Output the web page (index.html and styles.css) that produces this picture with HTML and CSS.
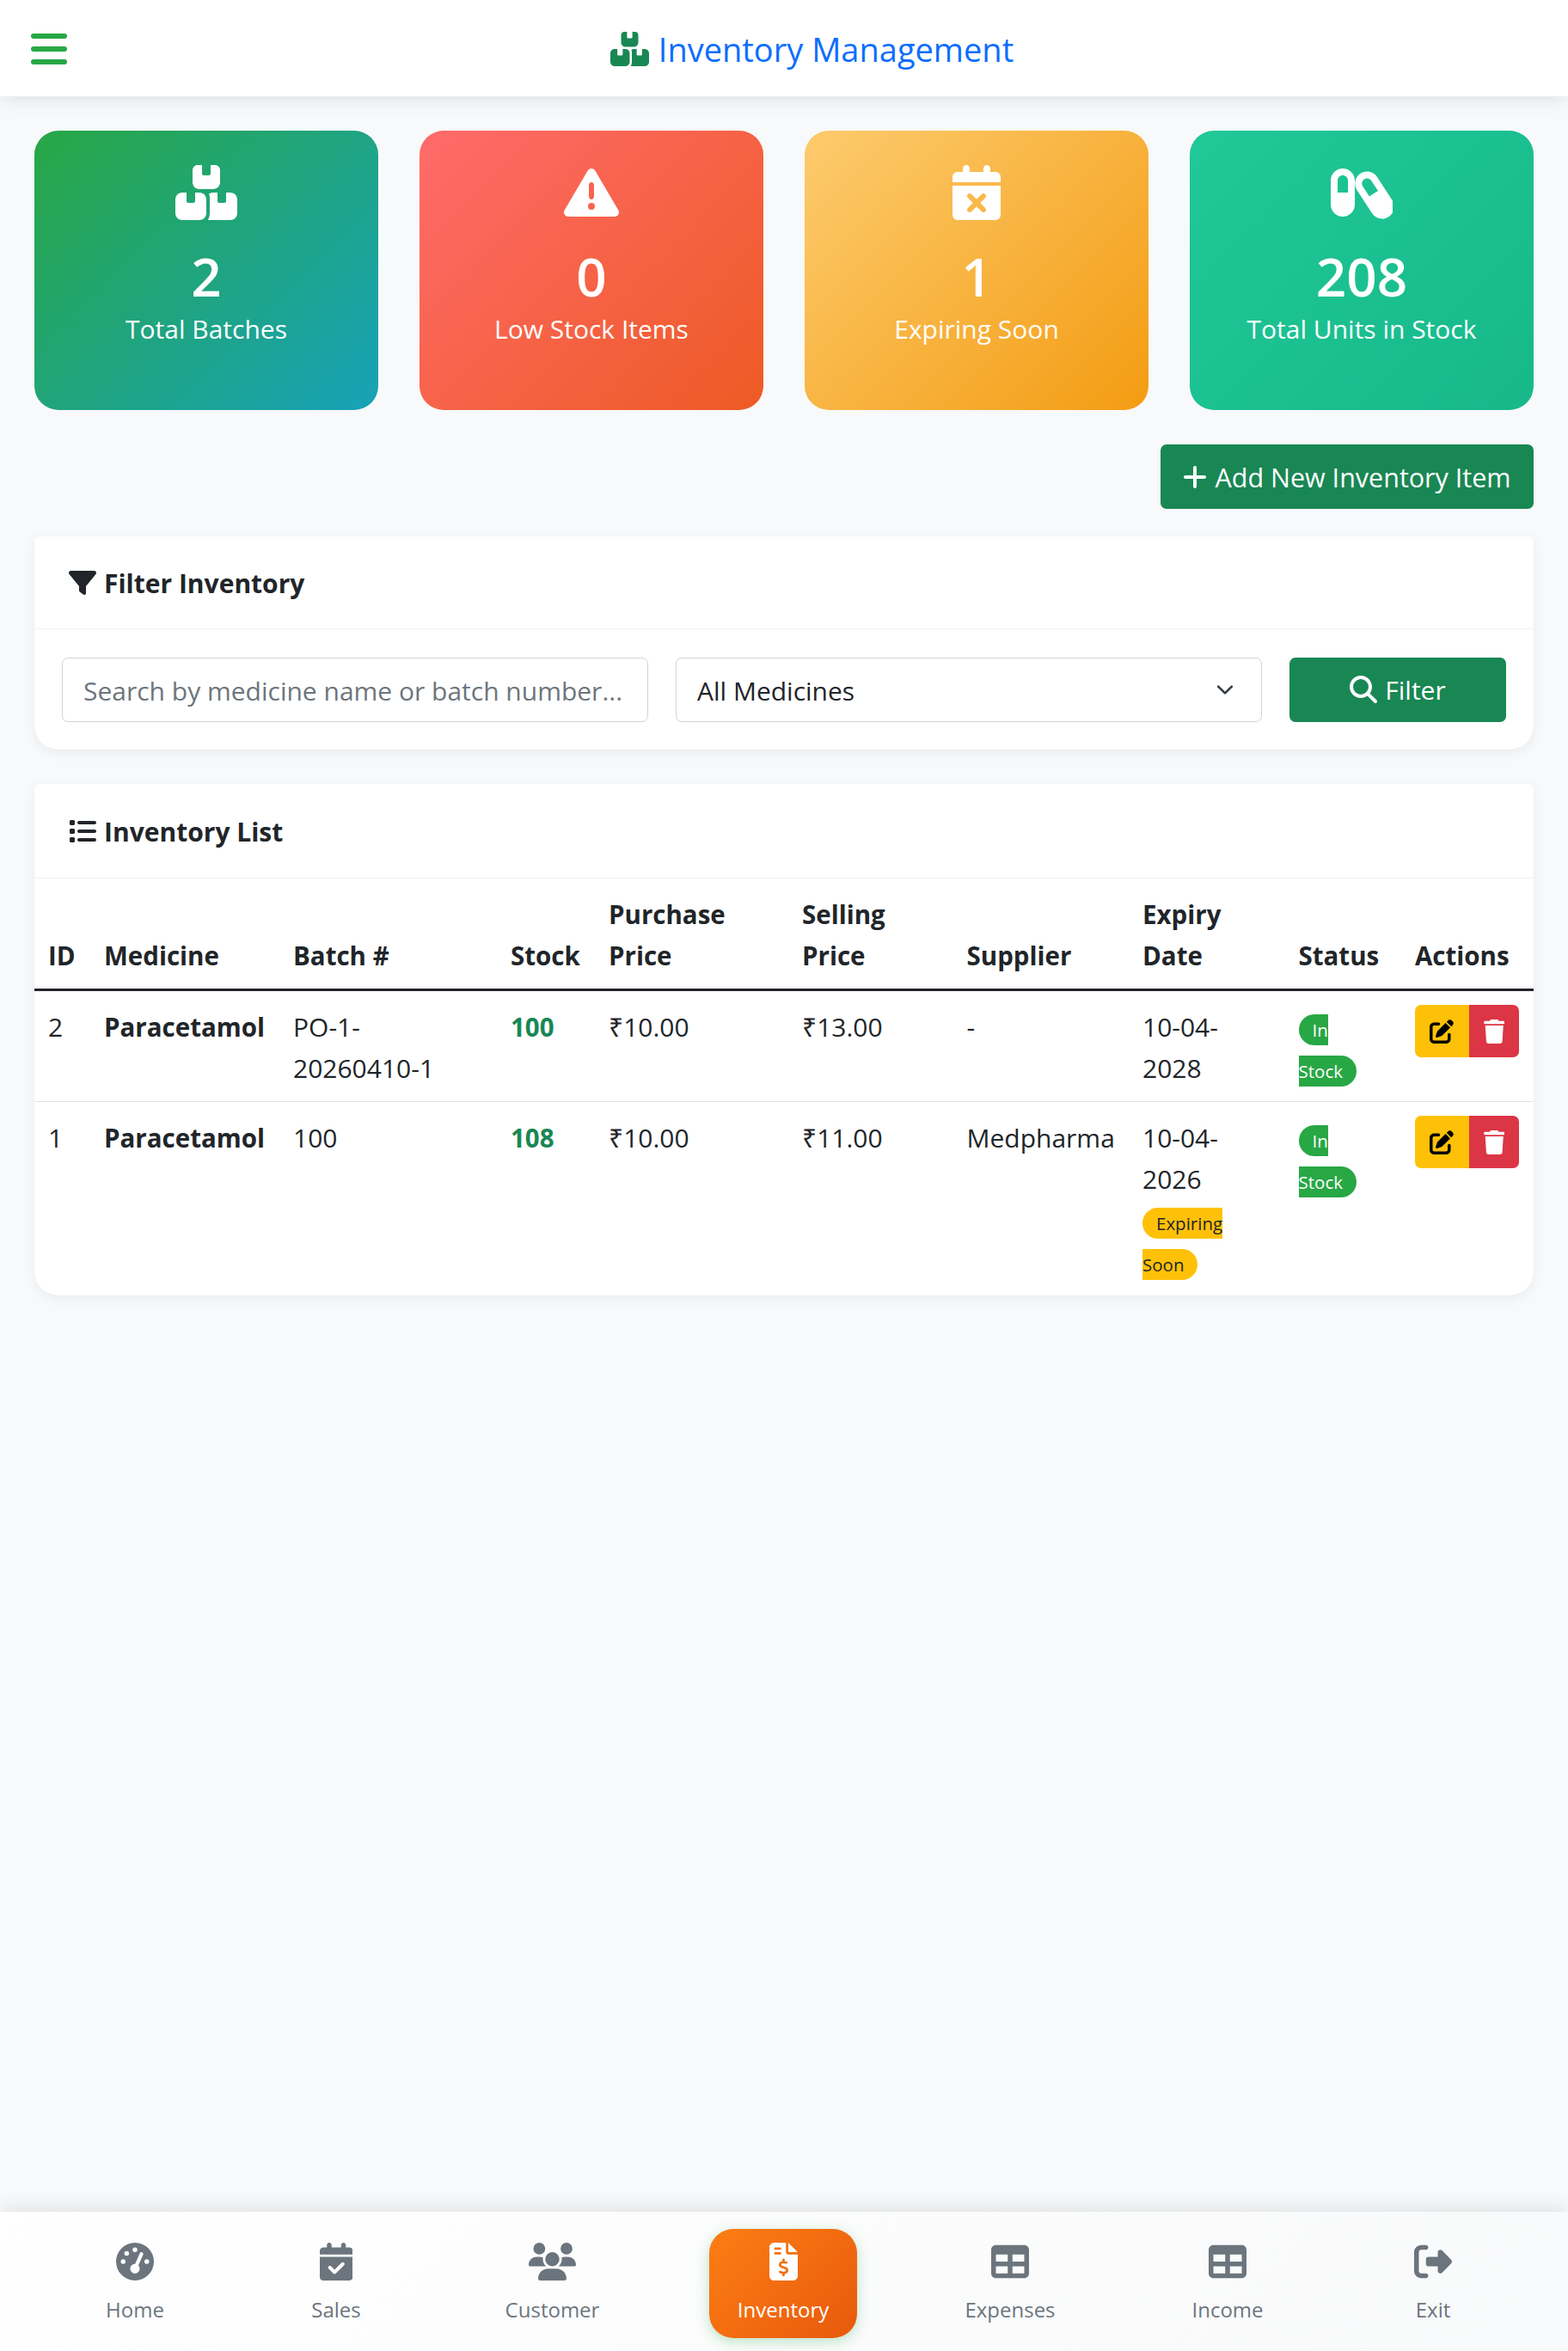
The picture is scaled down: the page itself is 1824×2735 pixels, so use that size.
FILE: index.html
```html
<!DOCTYPE html>
<html lang="en">
<head>
<meta charset="utf-8">
<title>Inventory Management</title>
<link rel="stylesheet" href="styles.css">
</head>
<body>
<header class="topbar">
  <button class="menu" type="button" aria-label="Menu"><span></span><span></span><span></span></button>
  <h1 class="title">
    <svg class="title-icon" viewBox="0 0 576 512"><path d="M248 0H208c-26.5 0-48 21.5-48 48V160c0 35.3 28.7 64 64 64H352c35.3 0 64-28.7 64-64V48c0-26.5-21.5-48-48-48H328V80c0 8.8-7.2 16-16 16H264c-8.8 0-16-7.2-16-16V0zM64 256c-35.3 0-64 28.7-64 64V448c0 35.3 28.7 64 64 64H224c35.3 0 64-28.7 64-64V320c0-35.3-28.7-64-64-64H184v80c0 8.8-7.2 16-16 16H120c-8.8 0-16-7.2-16-16V256H64zM352 512H512c35.3 0 64-28.7 64-64V320c0-35.3-28.7-64-64-64H472v80c0 8.8-7.2 16-16 16H408c-8.8 0-16-7.2-16-16V256H352c-15 0-28.8 5.1-39.7 13.8c4.9 10.4 7.7 22 7.7 34.2V448c0 23.3-6.2 45.2-17.1 64H352z"/></svg>
    <span>Inventory Management</span>
  </h1>
</header>

<main class="content">
  <section class="stats">
    <div class="stat stat-green">
      <svg class="stat-icon" viewBox="0 0 576 512"><path d="M248 0H208c-26.5 0-48 21.5-48 48V160c0 35.3 28.7 64 64 64H352c35.3 0 64-28.7 64-64V48c0-26.5-21.5-48-48-48H328V80c0 8.8-7.2 16-16 16H264c-8.8 0-16-7.2-16-16V0zM64 256c-35.3 0-64 28.7-64 64V448c0 35.3 28.7 64 64 64H224c35.3 0 64-28.7 64-64V320c0-35.3-28.7-64-64-64H184v80c0 8.8-7.2 16-16 16H120c-8.8 0-16-7.2-16-16V256H64zM352 512H512c35.3 0 64-28.7 64-64V320c0-35.3-28.7-64-64-64H472v80c0 8.8-7.2 16-16 16H408c-8.8 0-16-7.2-16-16V256H352c-15 0-28.8 5.1-39.7 13.8c4.9 10.4 7.7 22 7.7 34.2V448c0 23.3-6.2 45.2-17.1 64H352z"/></svg>
      <div class="stat-num">2</div>
      <div class="stat-label">Total Batches</div>
    </div>
    <div class="stat stat-red">
      <svg class="stat-icon" viewBox="0 0 512 512"><path d="M256 32c14.2 0 27.3 7.5 34.5 19.8l216 368c7.3 12.4 7.3 27.7 .2 40.1S486.3 480 472 480H40c-14.3 0-27.6-7.7-34.7-20.1s-7-27.8 .2-40.1l216-368C228.7 39.5 241.8 32 256 32zm0 128c-13.3 0-24 10.7-24 24V296c0 13.3 10.7 24 24 24s24-10.7 24-24V184c0-13.3-10.7-24-24-24zm32 224a32 32 0 1 0 -64 0 32 32 0 1 0 64 0z"/></svg>
      <div class="stat-num">0</div>
      <div class="stat-label">Low Stock Items</div>
    </div>
    <div class="stat stat-amber">
      <svg class="stat-icon" viewBox="0 0 448 512"><path d="M128 0c17.7 0 32 14.3 32 32V64H288V32c0-17.7 14.3-32 32-32s32 14.3 32 32V64h48c26.5 0 48 21.5 48 48v48H0V112C0 85.5 21.5 64 48 64H96V32c0-17.7 14.3-32 32-32zM0 192H448V464c0 26.5-21.5 48-48 48H48c-26.5 0-48-21.5-48-48V192zM305 305c9.4-9.4 9.4-24.6 0-33.9s-24.6-9.4-33.9 0l-47 47-47-47c-9.4-9.4-24.6-9.4-33.9 0s-9.4 24.6 0 33.9l47 47-47 47c-9.4 9.4-9.4 24.6 0 33.9s24.6 9.4 33.9 0l47-47 47 47c9.4 9.4 24.6 9.4 33.9 0s9.4-24.6 0-33.9l-47-47 47-47z"/></svg>
      <div class="stat-num">1</div>
      <div class="stat-label">Expiring Soon</div>
    </div>
    <div class="stat stat-teal">
      <svg class="stat-icon" viewBox="0 0 576 512"><path fill-rule="evenodd" d="M112 32C173.900 32 224 82.100 224 144V368C224 429.900 173.900 480 112 480S0 429.900 0 368V144C0 82.100 50.100 32 112 32zM112 96C85.500 96 64 117.500 64 144V256H160V144C160 117.500 138.500 96 112 96z"/><g transform="rotate(-33 408 280)"><path fill-rule="evenodd" d="M408 40C469.900 40 520 90.100 520 152V408C520 469.900 469.900 520 408 520S296 469.900 296 408V152C296 90.100 346.100 40 408 40zM408 104C381.500 104 360 125.500 360 152V264H456V152C456 125.500 434.500 104 408 104z"/></g></svg>
      <div class="stat-num">208</div>
      <div class="stat-label">Total Units in Stock</div>
    </div>
  </section>

  <div class="add-row">
    <button class="btn btn-add" type="button">
      <svg class="btn-plus" viewBox="0 0 448 512"><path d="M256 80c0-17.700-14.300-32-32-32s-32 14.300-32 32V224H48c-17.700 0-32 14.300-32 32s14.300 32 32 32H192V432c0 17.700 14.300 32 32 32s32-14.300 32-32V288H400c17.700 0 32-14.300 32-32s-14.300-32-32-32H256V80z"/></svg>
      Add New Inventory Item
    </button>
  </div>

  <section class="panel panel-filter">
    <div class="panel-head">
      <svg class="head-icon" viewBox="0 0 512 512"><path d="M3.900 54.900C10.500 40.900 24.500 32 40 32H472c15.500 0 29.500 8.900 36.100 22.900s4.600 30.500-5.200 42.500L320 320.900V448c0 12.100-6.800 23.200-17.700 28.600s-23.800 4.300-33.500-3l-64-48c-8.100-6-12.800-15.500-12.800-25.600V320.900L9 97.300C-.7 85.400-2.800 68.800 3.900 54.900z"/></svg>
      <h2>Filter Inventory</h2>
    </div>
    <form class="filter-form">
      <input class="field" type="text" placeholder="Search by medicine name or batch number...">
      <select class="field field-select"><option>All Medicines</option></select>
      <button class="btn btn-filter" type="button">
        <svg class="btn-search" viewBox="0 0 512 512"><path d="M416 208c0 45.900-14.900 88.300-40 122.700L502.600 457.400c12.500 12.500 12.500 32.800 0 45.300s-32.800 12.500-45.300 0L330.700 376c-34.400 25.200-76.800 40-122.700 40C93.100 416 0 322.900 0 208S93.100 0 208 0S416 93.100 416 208zM208 352a144 144 0 1 0 0-288 144 144 0 1 0 0 288z"/></svg>
        Filter
      </button>
    </form>
  </section>

  <section class="panel panel-list">
    <div class="panel-head">
      <svg class="head-icon" viewBox="0 0 512 512"><path d="M40 48C26.700 48 16 58.700 16 72v48c0 13.300 10.700 24 24 24H88c13.300 0 24-10.700 24-24V72c0-13.300-10.700-24-24-24H40zM192 64c-17.700 0-32 14.300-32 32s14.300 32 32 32H480c17.700 0 32-14.300 32-32s-14.300-32-32-32H192zm0 160c-17.700 0-32 14.300-32 32s14.300 32 32 32H480c17.700 0 32-14.300 32-32s-14.300-32-32-32H192zm0 160c-17.700 0-32 14.300-32 32s14.300 32 32 32H480c17.700 0 32-14.300 32-32s-14.300-32-32-32H192zM16 232v48c0 13.300 10.700 24 24 24H88c13.300 0 24-10.700 24-24V232c0-13.300-10.700-24-24-24H40c-13.300 0-24 10.700-24 24zM40 368c-13.300 0-24 10.700-24 24v48c0 13.300 10.700 24 24 24H88c13.300 0 24-10.700 24-24V392c0-13.300-10.700-24-24-24H40z"/></svg>
      <h2>Inventory List</h2>
    </div>
    <table class="grid">
      <colgroup>
        <col class="c-id"><col class="c-med"><col class="c-batch"><col class="c-stock"><col class="c-buy"><col class="c-sell"><col class="c-sup"><col class="c-exp"><col class="c-status"><col class="c-act">
      </colgroup>
      <thead>
        <tr>
          <th>ID</th><th>Medicine</th><th>Batch #</th><th>Stock</th><th>Purchase<br>Price</th><th>Selling<br>Price</th><th>Supplier</th><th>Expiry<br>Date</th><th>Status</th><th>Actions</th>
        </tr>
      </thead>
      <tbody>
        <tr>
          <td>2</td>
          <td class="strong">Paracetamol</td>
          <td>PO-1-<br>20260410-1</td>
          <td class="stock">100</td>
          <td>₹10.00</td>
          <td>₹13.00</td>
          <td>-</td>
          <td>10-04-<br>2028</td>
          <td><span class="pill pill-ok">In<br>Stock</span></td>
          <td>
            <div class="actions">
              <button class="act act-edit" type="button" aria-label="Edit"><svg viewBox="0 0 512 512"><path d="M471.600 21.700c-21.900-21.900-57.300-21.900-79.200 0L362.300 51.700l97.900 97.900 30.100-30.100c21.900-21.900 21.900-57.300 0-79.200L471.600 21.700zm-299.200 220c-6.100 6.100-10.800 13.600-13.500 21.900l-29.600 88.800c-2.900 8.600-.6 18.100 5.800 24.600s15.900 8.700 24.600 5.800l88.800-29.600c8.200-2.700 15.700-7.400 21.900-13.500L437.700 172.300 339.700 74.300 172.400 241.700zM96 64C43 64 0 107 0 160V416c0 53 43 96 96 96H352c53 0 96-43 96-96V320c0-17.700-14.300-32-32-32s-32 14.300-32 32v96c0 17.700-14.300 32-32 32H96c-17.700 0-32-14.300-32-32V160c0-17.700 14.300-32 32-32h96c17.700 0 32-14.300 32-32s-14.300-32-32-32H96z"/></svg></button>
              <button class="act act-del" type="button" aria-label="Delete"><svg viewBox="0 0 448 512"><path d="M135.200 17.700L128 32H32C14.300 32 0 46.300 0 64S14.300 96 32 96H416c17.700 0 32-14.300 32-32s-14.300-32-32-32H320l-7.200-14.300C307.400 6.800 296.300 0 284.200 0H163.800c-12.100 0-23.200 6.800-28.600 17.700zM416 128H32L53.200 467c1.600 25.300 22.600 45 47.900 45H346.900c25.300 0 46.300-19.700 47.900-45L416 128z"/></svg></button>
            </div>
          </td>
        </tr>
        <tr>
          <td>1</td>
          <td class="strong">Paracetamol</td>
          <td>100</td>
          <td class="stock">108</td>
          <td>₹10.00</td>
          <td>₹11.00</td>
          <td>Medpharma</td>
          <td>10-04-<br>2026<br><span class="pill pill-warn">Expiring<br>Soon</span></td>
          <td><span class="pill pill-ok">In<br>Stock</span></td>
          <td>
            <div class="actions">
              <button class="act act-edit" type="button" aria-label="Edit"><svg viewBox="0 0 512 512"><path d="M471.600 21.700c-21.900-21.900-57.300-21.900-79.200 0L362.300 51.700l97.900 97.900 30.100-30.100c21.900-21.900 21.900-57.300 0-79.200L471.600 21.700zm-299.200 220c-6.100 6.100-10.800 13.600-13.500 21.900l-29.600 88.800c-2.900 8.600-.6 18.100 5.800 24.600s15.900 8.700 24.600 5.800l88.800-29.600c8.200-2.700 15.700-7.400 21.900-13.500L437.700 172.300 339.700 74.300 172.400 241.700zM96 64C43 64 0 107 0 160V416c0 53 43 96 96 96H352c53 0 96-43 96-96V320c0-17.700-14.300-32-32-32s-32 14.300-32 32v96c0 17.700-14.300 32-32 32H96c-17.700 0-32-14.300-32-32V160c0-17.700 14.300-32 32-32h96c17.700 0 32-14.300 32-32s-14.300-32-32-32H96z"/></svg></button>
              <button class="act act-del" type="button" aria-label="Delete"><svg viewBox="0 0 448 512"><path d="M135.200 17.700L128 32H32C14.300 32 0 46.300 0 64S14.300 96 32 96H416c17.700 0 32-14.300 32-32s-14.300-32-32-32H320l-7.200-14.300C307.400 6.800 296.300 0 284.200 0H163.800c-12.100 0-23.200 6.800-28.600 17.700zM416 128H32L53.200 467c1.600 25.300 22.600 45 47.900 45H346.900c25.300 0 46.300-19.700 47.900-45L416 128z"/></svg></button>
            </div>
          </td>
        </tr>
      </tbody>
    </table>
  </section>
</main>

<nav class="bottom-nav">
  <a class="nav-item">
    <svg viewBox="0 0 512 512"><path d="M0 256a256 256 0 1 1 512 0A256 256 0 1 1 0 256zM288 96a32 32 0 1 0 -64 0 32 32 0 1 0 64 0zM256 416c35.300 0 64-28.700 64-64c0-17.400-6.900-33.100-18.100-44.600L366 161.700c5.300-12.100-.2-26.300-12.300-31.600s-26.300 .2-31.600 12.300L257.900 288c-.6 0-1.300 0-1.900 0c-35.300 0-64 28.700-64 64s28.700 64 64 64zM176 144a32 32 0 1 0 -64 0 32 32 0 1 0 64 0zM96 288a32 32 0 1 0 0-64 32 32 0 1 0 0 64zm352-32a32 32 0 1 0 -64 0 32 32 0 1 0 64 0z"/></svg>
    <span>Home</span>
  </a>
  <a class="nav-item">
    <svg viewBox="0 0 448 512"><path d="M128 0c17.700 0 32 14.300 32 32V64H288V32c0-17.700 14.300-32 32-32s32 14.300 32 32V64h48c26.500 0 48 21.500 48 48v48H0V112C0 85.500 21.500 64 48 64H96V32c0-17.700 14.300-32 32-32zM0 192H448V464c0 26.500-21.500 48-48 48H48c-26.500 0-48-21.500-48-48V192zM329 305c9.400-9.400 9.400-24.600 0-33.900s-24.600-9.400-33.900 0l-95 95-47-47c-9.400-9.400-24.600-9.400-33.900 0s-9.400 24.600 0 33.900l64 64c9.400 9.400 24.600 9.400 33.900 0L329 305z"/></svg>
    <span>Sales</span>
  </a>
  <a class="nav-item">
    <svg viewBox="0 0 640 512"><path d="M144 0a80 80 0 1 1 0 160A80 80 0 1 1 144 0zM512 0a80 80 0 1 1 0 160A80 80 0 1 1 512 0zM0 298.700C0 239.800 47.800 192 106.700 192h42.700c15.900 0 31 3.500 44.600 9.700c-1.300 7.200-1.900 14.700-1.900 22.300c0 38.200 16.800 72.500 43.300 96c-.2 0-.4 0-.7 0H21.300C9.600 320 0 310.400 0 298.700zM405.300 320c-.2 0-.4 0-.7 0c26.600-23.500 43.300-57.800 43.300-96c0-7.600-.7-15-1.900-22.300c13.600-6.300 28.700-9.700 44.600-9.700h42.700C592.200 192 640 239.800 640 298.700c0 11.800-9.600 21.300-21.300 21.300H405.300zM224 224a96 96 0 1 1 192 0 96 96 0 1 1 -192 0zM128 485.300C128 411.700 187.700 352 261.300 352H378.700C452.300 352 512 411.700 512 485.300c0 14.700-11.900 26.700-26.700 26.700H154.700c-14.700 0-26.700-11.900-26.700-26.700z"/></svg>
    <span>Customer</span>
  </a>
  <a class="nav-item nav-active">
    <svg viewBox="0 0 384 512"><path d="M64 0C28.700 0 0 28.700 0 64V448c0 35.300 28.700 64 64 64H320c35.300 0 64-28.700 64-64V160H256c-17.700 0-32-14.300-32-32V0H64zM256 0V128H384L256 0zM64 80c0-8.800 7.200-16 16-16h64c8.800 0 16 7.200 16 16s-7.200 16-16 16H80c-8.800 0-16-7.200-16-16zm0 64c0-8.800 7.200-16 16-16h64c8.800 0 16 7.200 16 16s-7.200 16-16 16H80c-8.800 0-16-7.200-16-16zm128 72c8.800 0 16 7.200 16 16v17.300c8.500 1.200 16.700 3.100 24.100 5.100c8.500 2.300 13.600 11 11.300 19.600s-11 13.600-19.600 11.300c-11.100-3-22-5.200-32.100-5.300c-8.400-.1-17.400 1.800-23.600 5.500c-5.700 3.400-8.100 7.300-8.100 12.800c0 3.700 1.300 6.500 7.300 10.100c6.900 4.100 16.600 7.100 29.200 10.900l.5 .1 0 0 0 0c11.300 3.400 25.300 7.600 36.300 14.600c12.100 7.600 22.400 19.700 22.700 38.200c.3 19.300-9.600 33.300-22.900 41.600c-7.700 4.800-16.400 7.600-25.100 9.100V440c0 8.800-7.200 16-16 16s-16-7.200-16-16V422.200c-11.200-2.100-21.700-5.700-30.900-8.900l0 0c-2.100-.7-4.200-1.400-6.200-2.100c-8.400-2.800-12.900-11.900-10.100-20.200s11.900-12.900 20.200-10.100c2.500 .8 4.800 1.600 7.100 2.400l0 0 0 0 0 0c13.600 4.600 24.600 8.400 36.300 8.700c9.100 .3 17.900-1.700 23.700-5.300c5.100-3.200 7.900-7.300 7.800-14c-.1-4.600-1.800-7.800-7.700-11.600c-6.800-4.300-16.500-7.400-29-11.200l-1.600-.5 0 0c-11-3.300-24.300-7.300-34.800-13.700c-12-7.200-22.600-18.900-22.700-37.300c-.1-19.400 10.800-32.800 23.800-40.500c7.500-4.400 15.800-7.200 24.100-8.700V232c0-8.800 7.200-16 16-16z"/></svg>
    <span>Inventory</span>
  </a>
  <a class="nav-item">
    <svg viewBox="0 0 512 512"><path d="M64 256V160H224v96H64zm0 64H224v96H64V320zm224 96V320H448v96H288zM448 256H288V160H448v96zM64 32C28.700 32 0 60.700 0 96V416c0 35.300 28.700 64 64 64H448c35.300 0 64-28.700 64-64V96c0-35.300-28.700-64-64-64H64z"/></svg>
    <span>Expenses</span>
  </a>
  <a class="nav-item">
    <svg viewBox="0 0 512 512"><path d="M64 256V160H224v96H64zm0 64H224v96H64V320zm224 96V320H448v96H288zM448 256H288V160H448v96zM64 32C28.700 32 0 60.700 0 96V416c0 35.300 28.700 64 64 64H448c35.300 0 64-28.700 64-64V96c0-35.300-28.700-64-64-64H64z"/></svg>
    <span>Income</span>
  </a>
  <a class="nav-item">
    <svg viewBox="0 0 512 512"><path d="M377.900 105.900L500.700 228.700c7.200 7.200 11.300 17.100 11.300 27.300s-4.100 20.100-11.300 27.300L377.900 406.100c-6.400 6.400-15 9.900-24 9.900c-18.700 0-33.900-15.200-33.900-33.900l0-62.100-128 0c-17.700 0-32-14.300-32-32l0-64c0-17.700 14.300-32 32-32l128 0 0-62.100c0-18.700 15.200-33.900 33.900-33.900c9 0 17.600 3.600 24 9.900zM160 96L96 96c-17.700 0-32 14.300-32 32l0 256c0 17.700 14.300 32 32 32l64 0c17.700 0 32 14.300 32 32s-14.300 32-32 32l-64 0c-53 0-96-43-96-96L0 128C0 75 43 32 96 32l64 0c17.700 0 32 14.300 32 32s-14.300 32-32 32z"/></svg>
    <span>Exit</span>
  </a>
</nav>
</body>
</html>
```

FILE: styles.css
```css
* { box-sizing: border-box; }
html, body { height: 100%; }
body {
  margin: 0;
  min-height: 2735px;
  display: flex;
  flex-direction: column;
  background: #f8f9fa;
  color: #212529;
  font-family: "Open Sans", "Noto Sans", "Liberation Sans", sans-serif;
  font-size: 30px;
  line-height: 48px;
}
svg { fill: currentColor; display: block; }

/* top bar */
.topbar {
  position: relative;
  z-index: 2;
  height: 112px;
  flex: none;
  display: flex;
  align-items: center;
  padding: 0 36px;
  background: #fff;
  box-shadow: 0 4px 20px rgba(0, 0, 0, .1);
}
.menu {
  width: 65px;
  padding: 2px 23px 0 0;
  border: 0;
  background: none;
  display: flex;
  flex-direction: column;
  gap: 9px;
}
.menu span { display: block; height: 6px; border-radius: 3px; background: #28a745; }
.title {
  margin: 0 auto;
  padding-top: 2px;
  display: flex;
  align-items: center;
  gap: 11px;
  font-size: 38px;
  font-weight: 400;
  line-height: 48px;
  color: #0d6efd;
}
.title-icon { width: 45px; height: 40px; color: #198754; }

/* content */
.content { flex: 1; padding: 40px 40px 0; }
.stats { display: grid; grid-template-columns: repeat(4, 1fr); gap: 48px; }
.stat {
  height: 325px;
  padding-top: 40px;
  border-radius: 28px;
  color: #fff;
  display: flex;
  flex-direction: column;
  align-items: center;
  text-align: center;
}
.stat-green { background: linear-gradient(135deg, #28a745, #17a2b8); }
.stat-red { background: linear-gradient(135deg, #ff6b6b, #ee5a24); }
.stat-amber { background: linear-gradient(135deg, #fdcb6e, #f39c12); }
.stat-teal { background: linear-gradient(135deg, #20c997, #17b88a); }
.stat-icon { height: 64px; width: auto; }
.stat-num { margin-top: 27px; font-size: 62px; font-weight: 600; line-height: 76px; }
.stat-label { font-size: 30px; line-height: 48px; }

.add-row { display: flex; justify-content: flex-end; margin-top: 40px; }
.btn {
  height: 75px;
  border: 0;
  border-radius: 7px;
  background: #198754;
  color: #fff;
  font: inherit;
  display: inline-flex;
  align-items: center;
  justify-content: center;
}
.btn-add { width: 434px; gap: 9px; font-size: 30.5px; }
.btn-plus { width: 28px; height: 32px; }
.btn-filter { gap: 9px; padding-top: 2px; }
.btn-search { width: 32px; height: 32px; margin-top: -2px; }

/* panels */
.panel {
  background: #fff;
  border-radius: 7px 7px 28px 28px;
  box-shadow: 0 3.5px 14px rgba(0, 0, 0, .06);
}
.panel-filter { margin-top: 32px; }
.panel-list { margin-top: 40px; }
.panel-head {
  height: 108px;
  padding: 2px 40px 0;
  display: flex;
  align-items: center;
  gap: 9px;
  border-bottom: 1.75px solid #f0f1f3;
}
.panel-list .panel-head { height: 110px; }
.panel-head h2 { margin: 0; font-size: 30px; font-weight: 700; line-height: 48px; }
.head-icon { width: 32px; height: 32px; flex: none; margin-top: -2px; }

.filter-form {
  display: grid;
  grid-template-columns: 1fr 1fr 252px;
  gap: 32px;
  padding: 33px 32px 32px;
}
.field {
  width: 100%;
  height: 75px;
  padding: 2px 24px 0;
  border: 1.75px solid #ced4da;
  border-radius: 7px;
  background: #fff;
  color: #212529;
  font: inherit;
}
.field::placeholder { color: #6c757d; opacity: 1; }
.field-select {
  appearance: none;
  background-image: url("data:image/svg+xml,%3csvg xmlns='http://www.w3.org/2000/svg' viewBox='0 0 16 16'%3e%3cpath fill='none' stroke='%23343a40' stroke-linecap='round' stroke-linejoin='round' stroke-width='2' d='m2 5 6 6 6-6'/%3e%3c/svg%3e");
  background-repeat: no-repeat;
  background-position: right 28px center;
  background-size: 28px 21px;
}

/* table */
.grid { width: 100%; border-collapse: collapse; table-layout: fixed; }
.c-id { width: 65px; }
.c-med { width: 220px; }
.c-batch { width: 253px; }
.c-stock { width: 114px; }
.c-buy { width: 225px; }
.c-sell { width: 191.5px; }
.c-sup { width: 204.5px; }
.c-exp { width: 181.5px; }
.c-status { width: 135.5px; }
.c-act { width: 154px; }
.grid th, .grid td { padding: 18px 16px 14px; text-align: left; vertical-align: top; }
.grid tbody tr + tr td { padding-bottom: 15px; }
.grid th { vertical-align: bottom; font-size: 29.5px; font-weight: 700; border-bottom: 3.5px solid #212529; }
.grid tbody tr + tr td { border-top: 1.75px solid #dee2e6; }
.grid .strong { font-size: 29.5px; font-weight: 700; }
.grid .stock { font-size: 29.5px; font-weight: 700; color: #198754; }

.pill {
  padding: 4px 16px;
  border-radius: 999px;
  font-size: 20.5px;
  line-height: 20px;
}
.pill-ok { background: #28a745; color: #fff; }
.pill-warn { background: #ffc107; color: #212529; }

.actions { display: flex; margin-top: -2px; }
.act {
  height: 61px;
  padding: 0;
  border: 0;
  display: flex;
  align-items: center;
  justify-content: center;
}
.act svg { height: 28px; width: auto; }
.act-edit { width: 62.5px; background: #ffc107; color: #000; border-radius: 7px 0 0 7px; }
.act-del { width: 58.5px; background: #dc3545; color: #fff; border-radius: 0 7px 7px 0; }

/* bottom nav */
.bottom-nav {
  position: relative;
  z-index: 2;
  flex: none;
  height: 162px;
  padding: 20px 0 15px 40px;
  display: grid;
  grid-template-columns: 234px 234px 269px 268px 260px 246px 232px;
  background: linear-gradient(135deg, #fff, #f8f9fa);
  box-shadow: 0 -4px 20px rgba(0, 0, 0, .1);
}
.nav-item {
  justify-self: center;
  width: 172px;
  padding-top: 16px;
  border-radius: 28px;
  display: flex;
  flex-direction: column;
  align-items: center;
  color: #6c757d;
  font-size: 24px;
  line-height: 34px;
}
.nav-item svg { height: 44px; width: auto; margin-bottom: 17px; }
.nav-active {
  color: #fff;
  background: linear-gradient(135deg, #fd7e14, #e8590c);
  box-shadow: 0 4px 15px rgba(40, 167, 69, .3);
}
```
